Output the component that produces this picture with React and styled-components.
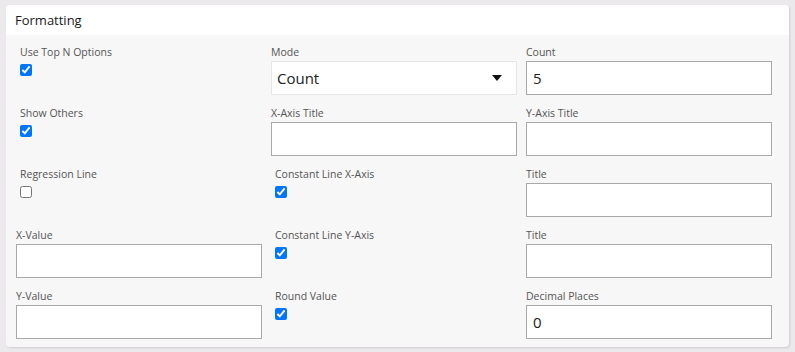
import React from "react";
import styled, { createGlobalStyle } from "styled-components";

const GlobalStyle = createGlobalStyle`
  html, body {
    margin: 0;
    background: #ebe9ec;
    font-family: "Open Sans", "Liberation Sans", sans-serif;
  }
`;

const Page = styled.div`
  padding: 5px 6px 5px 6px;
`;

const Panel = styled.section`
  width: 783px;
  background: #f7f7f7;
  border-radius: 4px;
  box-shadow: 1px 1px 2px rgba(0, 0, 0, 0.12);
  overflow: hidden;
`;

const Header = styled.header`
  height: 30px;
  display: flex;
  align-items: center;
  padding: 0 9px;
  background: #fff;
  font-size: 13px;
  font-weight: 500;
  color: #1a1a1a;
`;

const Body = styled.div`
  display: grid;
  grid-template-columns: repeat(3, 246px);
  column-gap: 9px;
  row-gap: 10px;
  padding: 9px 10px 8px;
`;

const Field = styled.div`
  display: flex;
  flex-direction: column;
  height: 51px;
  padding-left: ${(p) => (p.$check ? "4px" : "0")};
`;

const Label = styled.label`
  height: 17px;
  line-height: 16px;
  font-size: 10.5px;
  color: #555;
  white-space: nowrap;
`;

const TextBox = styled.div`
  box-sizing: border-box;
  height: 34px;
  border: 1px solid #a9a9a9;
  background: #fff;
  padding: 0 6px;
  display: flex;
  align-items: center;
  font-size: 15px;
  color: #222;
`;

const SelectBox = styled(TextBox)`
  border-color: #e6e6e6;
  justify-content: space-between;
  padding: 0 14px 0 5px;
`;

const Check = styled.input.attrs({ type: "checkbox", readOnly: true })`
  width: 12px;
  height: 12px;
  margin: 3px 0 0 0;
`;

function Caret() {
  return (
    <svg width="10" height="6" viewBox="0 0 10 6">
      <path d="M0 0 H10 L5 6 Z" fill="#111" />
    </svg>
  );
}

const fields = [
  { label: "Use Top N Options", check: true },
  { label: "Mode", select: "Count" },
  { label: "Count", value: "5" },
  { label: "Show Others", check: true },
  { label: "X-Axis Title", value: "" },
  { label: "Y-Axis Title", value: "" },
  { label: "Regression Line", check: false },
  { label: "Constant Line X-Axis", check: true },
  { label: "Title", value: "" },
  { label: "X-Value", value: "" },
  { label: "Constant Line Y-Axis", check: true },
  { label: "Title", value: "" },
  { label: "Y-Value", value: "" },
  { label: "Round Value", check: true },
  { label: "Decimal Places", value: "0" },
];

export default function App() {
  return (
    <>
      <GlobalStyle />
      <Page>
        <Panel>
          <Header>Formatting</Header>
          <Body>
            {fields.map((f, i) => (
              <Field key={i} $check={f.check !== undefined}>
                <Label>{f.label}</Label>
                {f.check !== undefined ? (
                  <Check checked={f.check} />
                ) : f.select ? (
                  <SelectBox>
                    {f.select}
                    <Caret />
                  </SelectBox>
                ) : (
                  <TextBox>{f.value}</TextBox>
                )}
              </Field>
            ))}
          </Body>
        </Panel>
      </Page>
    </>
  );
}
